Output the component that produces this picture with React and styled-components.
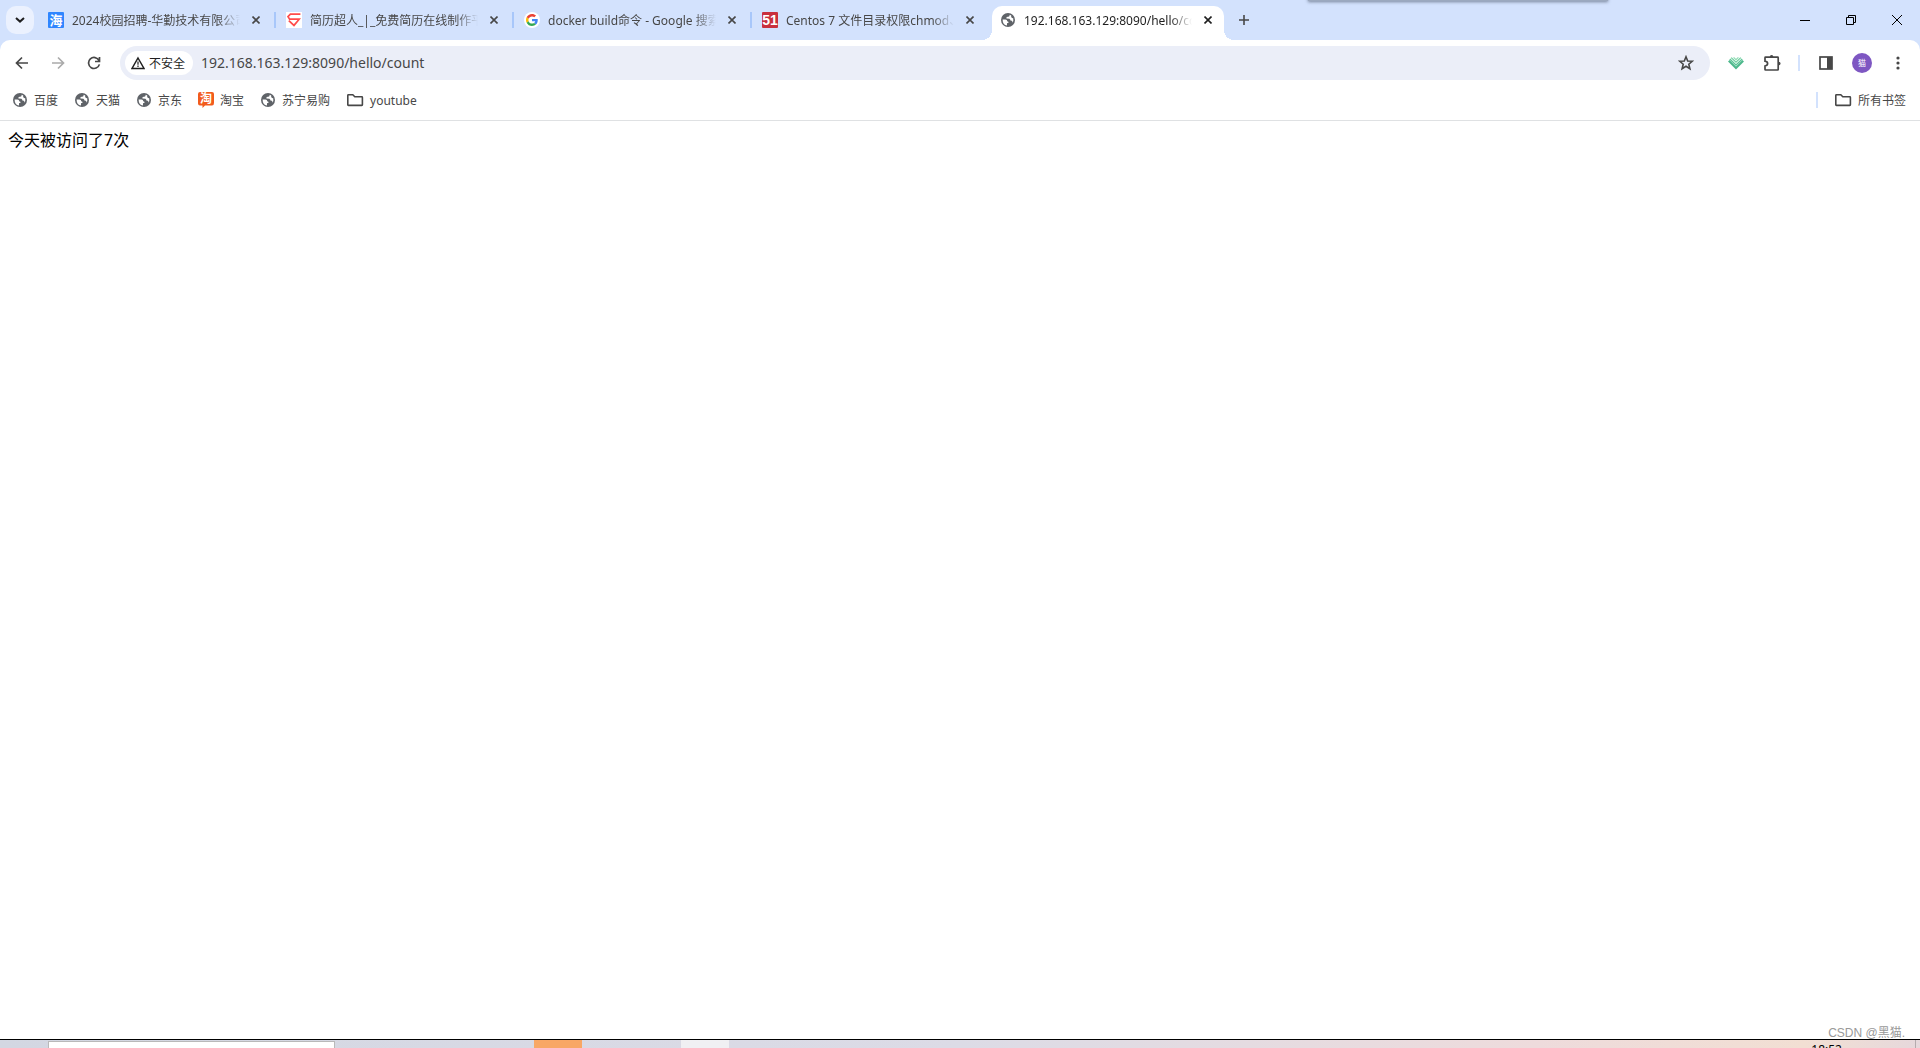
import React from 'react';
import styled, { createGlobalStyle } from 'styled-components';

const GlobalStyle = createGlobalStyle`
    * {
        box-sizing: border-box;
    }

    body {
        margin: 0;
        background: #fff;
        font-family: "Noto Sans", "Noto Sans CJK SC", sans-serif;
        font-size: 12px;
        color: #474747;
    }

    button, input {
        font: inherit;
        color: inherit;
    }
`;

const GlobeIcon = () => (
    <svg width="16" height="16" viewBox="0 0 16 16" aria-hidden="true">
        <circle cx="8" cy="8" r="7" fill="#5f6368" />
        <path
            d="M2.6 7.4 L5.4 7.4 Q7.4 7.6 7.2 9.2 Q8.8 9.4 8.6 10.8 L7 11.2 L7 13.4 Q2.6 12.8 2.6 7.4 Z M9.6 2.8 L9.6 3.6 Q9.4 4.8 8 4.8 L6.6 4.9 L6.4 6.6 L9.4 6.7 Q10.4 7 10.4 8.6 L11.8 8.8 Q12.6 9.4 12.4 10.8 Q13.8 8.6 13.2 6.2 L12 5.9 L11.2 5 L11.2 3.5 Z"
            fill="#fff"
        />
    </svg>
);

const FolderIcon = () => (
    <svg width="18" height="16" viewBox="0 0 18 16" fill="none" stroke="#474747" strokeWidth="1.6" aria-hidden="true">
        <path d="M1.8 3.4 Q1.8 2.8 2.4 2.8 H6.8 L8.8 4.8 H15.8 Q16.4 4.8 16.4 5.4 V12.8 Q16.4 13.4 15.8 13.4 H2.4 Q1.8 13.4 1.8 12.8 Z" />
    </svg>
);

const TaobaoIcon = () => (
    <svg width="16" height="16" viewBox="0 0 16 16" aria-hidden="true">
        <path d="M2 0 H14 Q16 0 16 2 V11 Q16 13.5 14 13.5 H7 L4.5 16 V13.5 H2 Q0 13.5 0 11.5 V2 Q0 0 2 0 Z" fill="#f25b1d" />
        <text x="8" y="11" fontSize="12" fontWeight="700" textAnchor="middle" fill="#fff">淘</text>
    </svg>
);

const HaiIcon = () => (
    <svg width="16" height="16" viewBox="0 0 16 16" aria-hidden="true">
        <rect width="16" height="16" rx="1" fill="#2f86ff" />
        <text x="8" y="13" fontSize="13" fontWeight="700" textAnchor="middle" fill="#fff">海</text>
    </svg>
);

const ResumeIcon = () => (
    <svg width="16" height="16" viewBox="0 0 16 16" fill="none" stroke="#ff4b4b" strokeWidth="1.7" aria-hidden="true">
        <rect width="16" height="16" fill="#fff" stroke="none" />
        <path d="M14.4 2.2 H4.4 L2 4.6 L3.6 7.2 H13.2 L8 13.4 L2.8 8.6" />
    </svg>
);

const GoogleIcon = () => (
    <svg width="16" height="16" viewBox="0 0 16 16" aria-hidden="true">
        <circle cx="8" cy="8" r="8" fill="#fff" />
        <g transform="translate(2 2) scale(0.25)">
            <path fill="#EA4335" d="M24 9.5c3.54 0 6.71 1.22 9.21 3.6l6.85-6.85C35.9 2.38 30.47 0 24 0 14.62 0 6.51 5.38 2.56 13.22l7.98 6.19C12.43 13.72 17.74 9.5 24 9.5z" />
            <path fill="#4285F4" d="M46.98 24.55c0-1.57-.15-3.09-.38-4.55H24v9.02h12.94c-.58 2.96-2.26 5.48-4.78 7.18l7.73 6c4.51-4.18 7.09-10.36 7.09-17.65z" />
            <path fill="#FBBC05" d="M10.53 28.59c-.48-1.45-.76-2.99-.76-4.59s.27-3.14.76-4.59l-7.98-6.19C.92 16.46 0 20.12 0 24c0 3.88.92 7.54 2.56 10.78l7.97-6.19z" />
            <path fill="#34A853" d="M24 48c6.48 0 11.93-2.13 15.89-5.81l-7.73-6c-2.15 1.45-4.92 2.3-8.16 2.3-6.26 0-11.57-4.22-13.47-9.91l-7.98 6.19C6.51 42.62 14.62 48 24 48z" />
        </g>
    </svg>
);

const FiftyOneIcon = () => (
    <svg width="16" height="16" viewBox="0 0 16 16" aria-hidden="true">
        <rect width="16" height="16" rx="1" fill="#c9303e" />
        <text x="8" y="13" fontSize="14" fontWeight="700" fontFamily="Liberation Sans Narrow, Liberation Sans, sans-serif" textAnchor="middle" fill="#fff">51</text>
    </svg>
);

const CloseIcon = () => (
    <svg width="8" height="8" viewBox="0 0 8 8" stroke="currentColor" strokeWidth="1.6" aria-hidden="true">
        <path d="M0.5 0.5 L7.5 7.5 M7.5 0.5 L0.5 7.5" />
    </svg>
);

const ArrowIcon = ({ flip }) => (
    <svg width="14" height="14" viewBox="0 0 14 14" fill="none" stroke="currentColor" strokeWidth="1.7" aria-hidden="true">
        <path d={flip ? 'M1 7 H12 M7 1.5 L12.5 7 L7 12.5' : 'M13 7 H2 M7 1.5 L1.5 7 L7 12.5'} />
    </svg>
);

const ReloadIcon = () => (
    <svg width="14" height="14" viewBox="0 0 14 14" fill="none" stroke="currentColor" strokeWidth="1.7" aria-hidden="true">
        <path d="M12 4.5 A5.5 5.5 0 1 0 12.4 8.4 M12.5 1 V5.5 H8" />
    </svg>
);

const tabs = [
    { title: '2024校园招聘-华勤技术有限公司', icon: <HaiIcon /> },
    { title: '简历超人_|_免费简历在线制作平台', icon: <ResumeIcon /> },
    { title: 'docker build命令 - Google 搜索', icon: <GoogleIcon /> },
    { title: 'Centos 7 文件目录权限chmod、chown', icon: <FiftyOneIcon /> },
    { title: '192.168.163.129:8090/hello/count', icon: <GlobeIcon />, active: true },
];

const bookmarks = [
    { name: '百度', icon: <GlobeIcon /> },
    { name: '天猫', icon: <GlobeIcon /> },
    { name: '京东', icon: <GlobeIcon /> },
    { name: '淘宝', icon: <TaobaoIcon /> },
    { name: '苏宁易购', icon: <GlobeIcon /> },
    { name: 'youtube', icon: <FolderIcon /> },
];

const App = () => (
    <Window>
        <GlobalStyle />
        <TabStrip>
            <PopupShadow />
            <TabSearch aria-label="搜索标签页">
                <svg width="10" height="6" viewBox="0 0 10 6" fill="none" stroke="#1f1f1f" strokeWidth="2" aria-hidden="true">
                    <path d="M1 1 L5 4.6 L9 1" />
                </svg>
            </TabSearch>
            <Tabs>
                {tabs.map((tab, i) => (
                    <Tab key={tab.title} $active={tab.active} $divider={i < tabs.length - 2}>
                        {tab.icon}
                        <TabTitle>{tab.title}</TabTitle>
                        <TabClose aria-label="关闭">
                            <CloseIcon />
                        </TabClose>
                    </Tab>
                ))}
            </Tabs>
            <NewTab aria-label="新标签页">
                <svg width="10" height="10" viewBox="0 0 10 10" stroke="#474747" strokeWidth="1.6" aria-hidden="true">
                    <path d="M0 5 H10 M5 0 V10" />
                </svg>
            </NewTab>
            <WindowControls>
                <WindowButton aria-label="最小化">
                    <svg width="10" height="10" viewBox="0 0 10 10" stroke="#000" aria-hidden="true">
                        <path d="M0 5.5 H10" />
                    </svg>
                </WindowButton>
                <WindowButton aria-label="还原">
                    <svg width="10" height="10" viewBox="0 0 10 10" fill="none" stroke="#000" aria-hidden="true">
                        <path d="M0.5 2.5 H7.5 V9.5 H0.5 Z M2.5 2.5 V0.5 H9.5 V7.5 H7.5" />
                    </svg>
                </WindowButton>
                <WindowButton aria-label="关闭窗口">
                    <svg width="10" height="10" viewBox="0 0 10 10" stroke="#000" aria-hidden="true">
                        <path d="M0 0 L10 10 M10 0 L0 10" />
                    </svg>
                </WindowButton>
            </WindowControls>
        </TabStrip>

        <ToolbarBacking>
            <Toolbar>
                <NavButton aria-label="后退">
                    <ArrowIcon />
                </NavButton>
                <NavButton aria-label="前进" disabled>
                    <ArrowIcon flip />
                </NavButton>
                <NavButton aria-label="重新加载">
                    <ReloadIcon />
                </NavButton>
                <AddressBar>
                    <SecurityChip>
                        <svg width="14" height="14" viewBox="0 0 14 14" fill="none" stroke="#1f1f1f" strokeWidth="1.5" aria-hidden="true">
                            <path d="M7 2 L13 12.4 H1 Z" />
                            <path d="M7 5.5 V8.8 M7 9.6 V11" strokeWidth="1.2" />
                        </svg>
                        不安全
                    </SecurityChip>
                    <Url>
                        <UrlInput aria-label="地址和搜索栏" defaultValue="192.168.163.129:8090/hello/count" />
                    </Url>
                    <StarButton aria-label="为此标签页添加书签">
                        <svg width="16" height="16" viewBox="0 0 16 16" fill="none" stroke="#474747" strokeWidth="1.6" aria-hidden="true">
                            <path d="M8 1.8 L9.7 6 L14.2 6.3 L10.8 9.2 L11.9 13.7 L8 11.3 L4.1 13.7 L5.2 9.2 L1.8 6.3 L6.3 6 Z" />
                        </svg>
                    </StarButton>
                </AddressBar>
                <NavButton aria-label="扩展">
                    <svg width="16" height="14" viewBox="0 0 16 14" fill="none" aria-hidden="true">
                        <path d="M5.6 1.4 L8 3.6 L10.4 1.4" stroke="#8fdcb4" strokeWidth="1.2" />
                        <path d="M3.2 1.6 L8 6.2 L12.8 1.6" stroke="#6fce9f" strokeWidth="1.3" />
                        <path d="M1.8 3 L8 9 L14.2 3" stroke="#5cc596" strokeWidth="1.3" />
                        <path d="M0.8 4.8 L8 12 L15.2 4.8" stroke="#4db88c" strokeWidth="2.2" />
                    </svg>
                </NavButton>
                <NavButton aria-label="扩展程序">
                    <svg width="18" height="18" viewBox="0 0 18 18" fill="none" stroke="#474747" strokeWidth="1.7" aria-hidden="true">
                        <path d="M2.6 3.2 H14.6 Q15.2 3.2 15.2 3.8 V15.4 Q15.2 16 14.6 16 H2.6 Q2 16 2 15.4 V12 Q4.6 11.6 4.6 9.6 Q4.6 7.6 2 7.2 V3.8 Q2 3.2 2.6 3.2 Z" />
                        <path d="M6.8 3 Q6.8 1 8.6 1 Q10.4 1 10.4 3 Z M15.6 7.8 Q17.6 7.8 17.6 9.6 Q17.6 11.4 15.6 11.4 Z" fill="#474747" stroke="none" />
                    </svg>
                </NavButton>
                <Divider />
                <NavButton aria-label="侧边栏">
                    <svg width="14" height="14" viewBox="0 0 14 14" fill="none" stroke="#474747" strokeWidth="1.7" aria-hidden="true">
                        <rect x="1" y="1" width="12" height="12" />
                        <rect x="8" y="1" width="5" height="12" fill="#474747" stroke="none" />
                    </svg>
                </NavButton>
                <NavButton aria-label="个人资料">
                    <Avatar>猫</Avatar>
                </NavButton>
                <NavButton aria-label="菜单">
                    <svg width="4" height="14" viewBox="0 0 4 14" fill="#474747" aria-hidden="true">
                        <circle cx="2" cy="2" r="1.6" />
                        <circle cx="2" cy="7" r="1.6" />
                        <circle cx="2" cy="12" r="1.6" />
                    </svg>
                </NavButton>
            </Toolbar>
        </ToolbarBacking>

        <BookmarksBar>
            {bookmarks.map((bookmark) => (
                <Bookmark key={bookmark.name} href="#">
                    {bookmark.icon}
                    <BookmarkName>{bookmark.name}</BookmarkName>
                </Bookmark>
            ))}
            <AllBookmarks>
                <Divider />
                <Bookmark href="#">
                    <FolderIcon />
                    <BookmarkName>所有书签</BookmarkName>
                </Bookmark>
            </AllBookmarks>
        </BookmarksBar>

        <Page>
            <PageText>今天被访问了7次</PageText>
            <Watermark>CSDN @黑猫.</Watermark>
        </Page>

        <Taskbar>
            <TaskbarSearch />
            <TaskbarItem $color="#f8a765" />
            <TaskbarItem $color="#f0f0f3" />
            <Clock>18:52</Clock>
            <ShowDesktop aria-label="显示桌面" />
        </Taskbar>
    </Window>
);

// Styled Components
const Window = styled.div`
    display: flex;
    flex-direction: column;
    height: 100vh;
    overflow: hidden;
`;

const IconButton = styled.button`
    display: flex;
    align-items: center;
    justify-content: center;
    flex-shrink: 0;
    padding: 0;
    border: none;
    background: none;
`;

const TabStrip = styled.header`
    position: relative;
    display: flex;
    flex-shrink: 0;
    height: 40px;
    padding-left: 6px;
    background: #d3e2fd;
`;

const PopupShadow = styled.div`
    position: absolute;
    top: -10px;
    right: 312px;
    width: 300px;
    height: 11px;
    background: #9ba9bf;
    box-shadow: 0 1px 3px rgba(60, 70, 90, 0.6);
`;

const TabSearch = styled(IconButton)`
    width: 28px;
    height: 28px;
    margin-top: 6px;
    border-radius: 10px;
    background: #ebf1fe;
`;

const Tabs = styled.nav`
    display: flex;
    margin-left: 4px;
`;

const Tab = styled.div`
    position: relative;
    display: flex;
    align-items: center;
    width: ${props => props.$active ? '232px' : '238px'};
    height: 34px;
    margin-top: 6px;
    padding: 0 6px 6px 10px;
    border-radius: 10px 10px 0 0;
    background: ${props => props.$active ? '#fff' : 'transparent'};
    color: ${props => props.$active ? '#1f1f1f' : '#474747'};

    ${props => props.$active && `
        margin-left: 2px;
        padding-left: 8px;

        &::before,
        &::after {
            content: '';
            position: absolute;
            bottom: 0;
            width: 10px;
            height: 10px;
        }

        &::before {
            right: 100%;
            background: radial-gradient(circle at 0 0, transparent 10px, #fff 10px);
        }

        &::after {
            left: 100%;
            background: radial-gradient(circle at 100% 0, transparent 10px, #fff 10px);
        }
    `}

    ${props => props.$divider && `
        &::after {
            content: '';
            position: absolute;
            top: 6px;
            right: 0;
            width: 2px;
            height: 16px;
            background: #a8c7fa;
        }
    `}

    svg {
        flex-shrink: 0;
    }
`;

const TabTitle = styled.span`
    width: 168px;
    margin-left: 8px;
    padding-top: 2px;
    overflow: hidden;
    line-height: 20px;
    white-space: nowrap;
    mask-image: linear-gradient(to right, #000 146px, transparent 168px);
`;

const TabClose = styled(IconButton)`
    width: 16px;
    height: 16px;
    margin-left: 8px;
`;

const NewTab = styled(IconButton)`
    width: 28px;
    height: 28px;
    margin: 6px 0 0 6px;
`;

const WindowControls = styled.div`
    display: flex;
    margin-left: auto;
`;

const WindowButton = styled(IconButton)`
    width: 46px;
    height: 40px;
`;

const ToolbarBacking = styled.div`
    flex-shrink: 0;
    background: #d3e2fd;
`;

const Toolbar = styled.div`
    display: flex;
    align-items: center;
    height: 46px;
    padding: 0 4px;
    border-radius: 10px 10px 0 0;
    background: #fff;
`;

const NavButton = styled(IconButton)`
    width: 36px;
    height: 34px;
    color: #474747;

    &:disabled {
        color: #ababab;
    }
`;

const AddressBar = styled.div`
    display: flex;
    flex: 1;
    align-items: center;
    height: 34px;
    margin: 0 8px;
    padding: 0 5px;
    border-radius: 17px;
    background: #ebeef8;
`;

const SecurityChip = styled(IconButton)`
    gap: 4px;
    width: 68px;
    height: 24px;
    padding-right: 2px;
    border-radius: 12px;
    background: #fff;
    color: #1f1f1f;
`;

const Url = styled.label`
    flex: 1;
    margin-left: 8px;
`;

const UrlInput = styled.input`
    width: 100%;
    padding: 0;
    border: none;
    outline: none;
    background: none;
    font-size: 14px;
    line-height: 20px;
`;

const StarButton = styled(IconButton)`
    width: 28px;
    height: 28px;
    margin-right: 5px;
`;

const Divider = styled.span`
    width: 2px;
    height: 16px;
    margin: 0 8px;
    background: #d3e2fd;
`;

const Avatar = styled.span`
    width: 20px;
    height: 20px;
    border-radius: 50%;
    background: #7e57c2;
    color: #fff;
    font-size: 8px;
    line-height: 20px;
`;

const BookmarksBar = styled.nav`
    display: flex;
    flex-shrink: 0;
    align-items: center;
    gap: 16px;
    height: 35px;
    padding: 0 14px 6px 12px;
    border-bottom: 1px solid #dfe1e3;
`;

const Bookmark = styled.a`
    display: flex;
    align-items: center;
    gap: 6px;
    color: #474747;
    text-decoration: none;
`;

const BookmarkName = styled.span`
    padding-top: 2px;
    line-height: 20px;
`;

const AllBookmarks = styled.div`
    display: flex;
    align-items: center;
    gap: 8px;
    margin-left: auto;
`;

const Page = styled.main`
    position: relative;
    flex: 1;
    padding: 8px;
    background: #fff;
`;

const PageText = styled.p`
    margin: 0;
    color: #000;
    font-size: 16px;
    line-height: 22px;
`;

const Watermark = styled.span`
    position: absolute;
    right: 15px;
    bottom: 0;
    color: #999;
    font-family: "Liberation Sans", "Noto Sans CJK SC", sans-serif;
    line-height: 12px;
`;

const Taskbar = styled.footer`
    display: flex;
    flex-shrink: 0;
    height: 9px;
    padding-left: 48px;
    overflow: hidden;
    border-top: 1px solid #000;
    background: linear-gradient(to right, #d3d7e2, #dcdbe6 50%, #eedbdc 80%, #f2dfd3 94%, #e6d8dc);
`;

const TaskbarSearch = styled.div`
    width: 287px;
    margin: 1px 199px 0 0;
    border: 1px solid #b9b9b9;
    border-bottom: none;
    background: #fff;
`;

const TaskbarItem = styled.div`
    width: 48px;
    margin-right: 99px;
    background: ${props => props.$color};
`;

const Clock = styled.time`
    margin: 4px 73px 0 auto;
    color: #000;
    line-height: 12px;
`;

const ShowDesktop = styled.button`
    width: 5px;
    padding: 0;
    border: none;
    border-left: 1px solid #b5abae;
    background: none;
`;

export default App;
